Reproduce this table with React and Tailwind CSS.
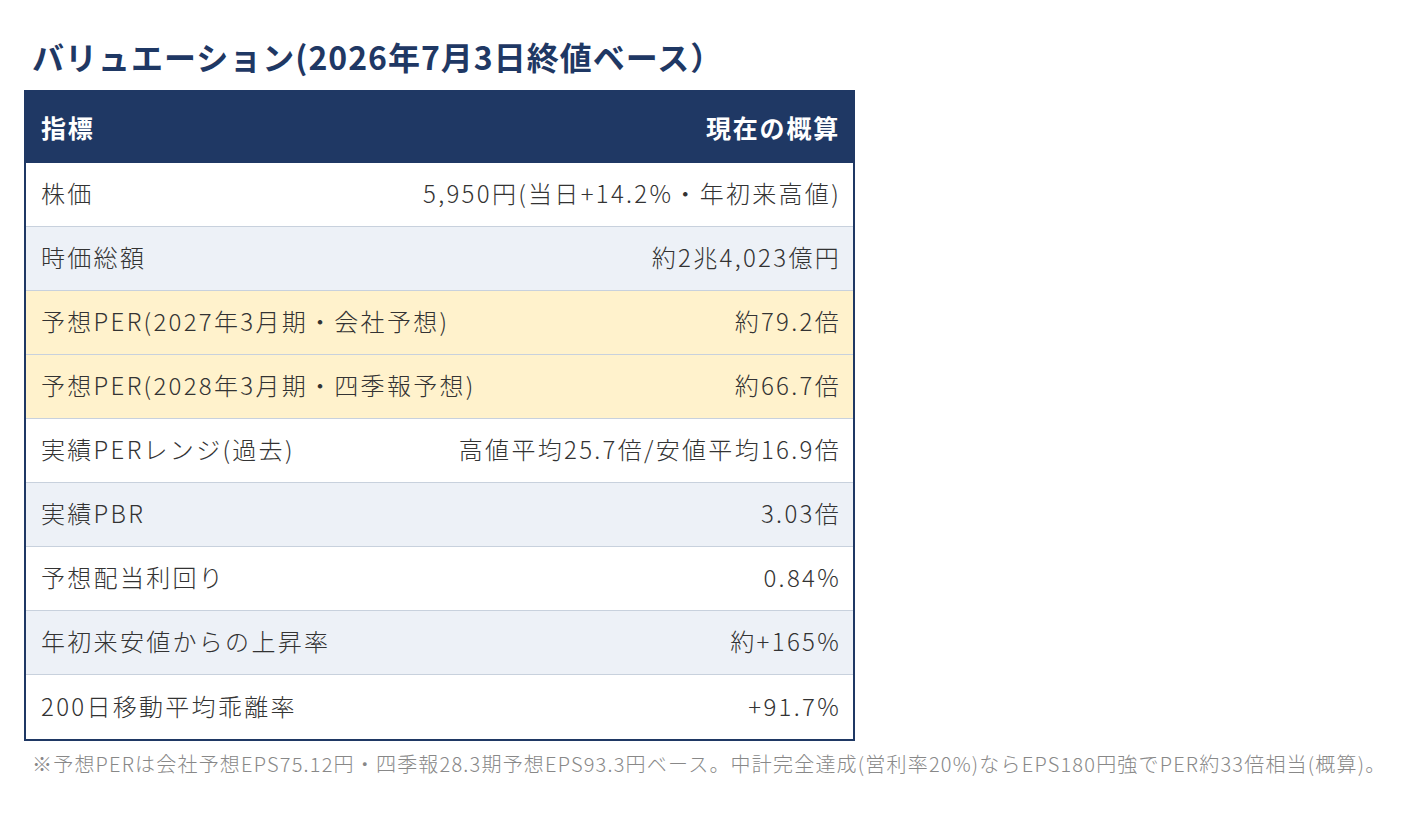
import React from 'react';

const rows = [
  { label: '株価', value: '5,950円(当日+14.2%・年初来高値)', tone: 'white' },
  { label: '時価総額', value: '約2兆4,023億円', tone: 'gray' },
  { label: '予想PER(2027年3月期・会社予想)', value: '約79.2倍', tone: 'yellow' },
  { label: '予想PER(2028年3月期・四季報予想)', value: '約66.7倍', tone: 'yellow' },
  { label: '実績PERレンジ(過去)', value: '高値平均25.7倍/安値平均16.9倍', tone: 'white' },
  { label: '実績PBR', value: '3.03倍', tone: 'gray' },
  { label: '予想配当利回り', value: '0.84%', tone: 'white' },
  { label: '年初来安値からの上昇率', value: '約+165%', tone: 'gray' },
  { label: '200日移動平均乖離率', value: '+91.7%', tone: 'white' },
];

const toneClass = {
  white: 'bg-white',
  gray: 'bg-[#edf1f7]',
  yellow: 'bg-[#fff2cc]',
};

export default function App() {
  return (
    <div className="min-h-screen bg-white pl-[24px] pt-[32px] font-['Noto_Sans_CJK_JP','Noto_Sans',sans-serif]">
      {/* title */}
      <h1 className="pl-[8px] text-[32px] leading-[48px] tracking-[1px] font-bold text-[#1f3864] mb-[10px]">
        バリュエーション(2026年7月3日終値ベース）
      </h1>

      {/* table */}
      <div className="w-[831px] border-2 border-[#1f3864]">
        <div className="flex items-center justify-between h-[71px] bg-[#1f3864] pl-[15px] pr-[13px] text-white text-[25px] tracking-[1.8px] font-bold">
          <span>指標</span>
          <span>現在の概算</span>
        </div>
        {rows.map((r, i) => (
          <div
            key={i}
            className={`flex items-center justify-between h-[64px] pl-[15px] pr-[12px] pb-[3px] text-[24px] tracking-[2.3px] font-light text-[#333333] ${
              i < rows.length - 1 ? 'border-b border-[#c8d1dd]' : ''
            } ${toneClass[r.tone]}`}
          >
            <span>{r.label}</span>
            <span>{r.value}</span>
          </div>
        ))}
      </div>

      {/* note */}
      <p className="pl-[8px] mt-[8px] text-[20px] leading-[30px] tracking-[1.2px] font-light text-[#888888]">
        ※予想PERは会社予想EPS75.12円・四季報28.3期予想EPS93.3円ベース。中計完全達成(営利率20%)ならEPS180円強でPER約33倍相当(概算)。
      </p>
    </div>
  );
}
